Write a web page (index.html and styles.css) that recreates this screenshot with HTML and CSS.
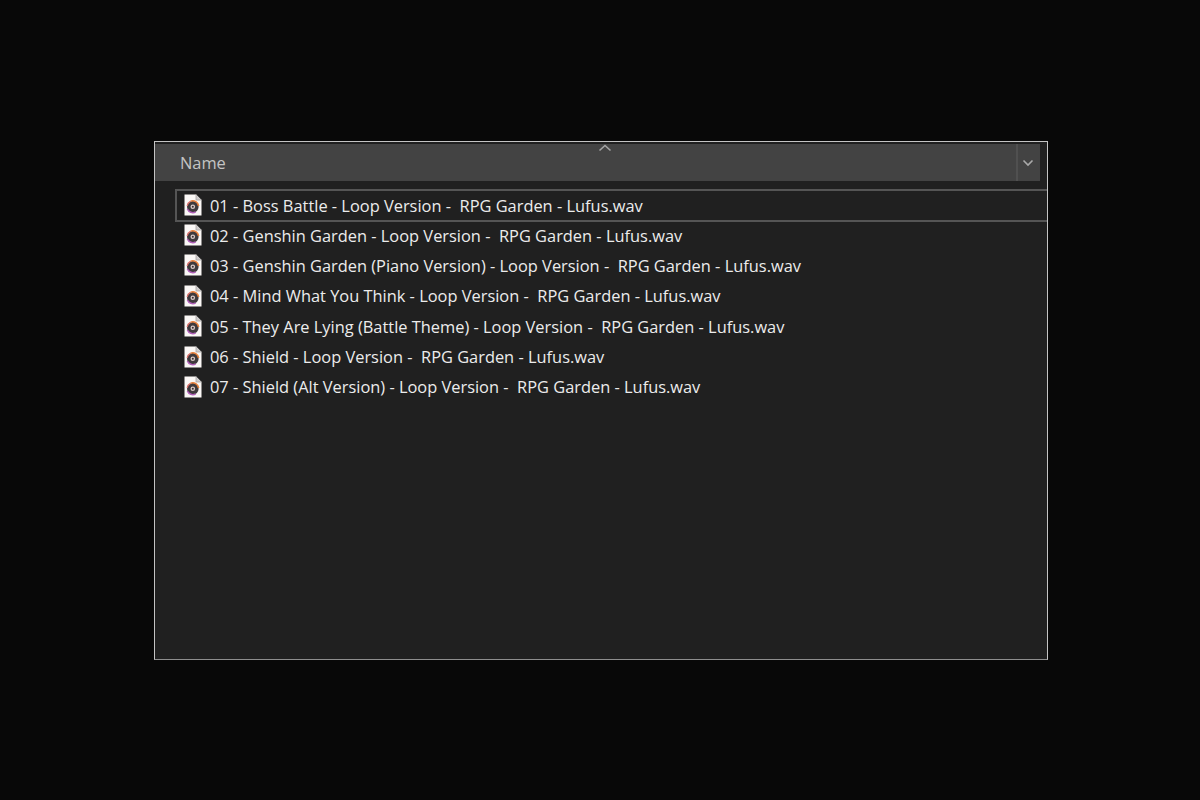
FILE: index.html
```html
<!DOCTYPE html>
<html lang="en">
<head>
<meta charset="utf-8">
<title>Files</title>
<link rel="stylesheet" href="styles.css">
</head>
<body>
<svg class="defs" width="0" height="0" aria-hidden="true">
  <symbol id="wav" viewBox="0 0 18 22">
    <path d="M0.5 0.5H12L17.5 6V21.5H0.5Z" fill="#fbf8f6"/>
    <path d="M12 0.5V6H17.5" fill="#cfcccc" stroke="#a9a5a5" stroke-width="0.8"/>
    <circle cx="8.8" cy="12.8" r="5.8" fill="#3f3a3c"/>
    <path d="M3.4 15A5.9 5.9 0 0 0 11.6 18" fill="none" stroke="#b060b8" stroke-width="1.5"/>
    <path d="M6.6 7.2A5.9 5.9 0 0 1 14.6 12" fill="none" stroke="#e8813c" stroke-width="1.7"/>
    <path d="M3.2 12A5.9 5.9 0 0 1 6.4 7.4" fill="none" stroke="#d8706a" stroke-width="1.2"/>
    <circle cx="8.8" cy="12.8" r="2.3" fill="#d8c8c4"/>
    <circle cx="8.8" cy="12.8" r="1" fill="#3a3034"/>
  </symbol>
</svg>
<main class="window">
  <header class="header">
    <div class="name-col">
      <svg class="sort" width="14" height="8" viewBox="0 0 14 8"><path d="M1.5 6.5L7 1.5L12.5 6.5" fill="none" stroke="#a4a4a4" stroke-width="1.6"/></svg>
      <span class="name-label">Name</span>
    </div>
    <div class="drop-col">
      <svg width="12" height="8" viewBox="0 0 12 8"><path d="M1.5 1.5L6 6L10.5 1.5" fill="none" stroke="#aaaaaa" stroke-width="1.6"/></svg>
    </div>
  </header>
  <ul class="list">
    <li class="row row-selected"><svg class="icon"><use href="#wav"/></svg><span class="file">01 - Boss Battle - Loop Version -  RPG Garden - Lufus.wav</span></li>
    <li class="row"><svg class="icon"><use href="#wav"/></svg><span class="file">02 - Genshin Garden - Loop Version -  RPG Garden - Lufus.wav</span></li>
    <li class="row"><svg class="icon"><use href="#wav"/></svg><span class="file">03 - Genshin Garden (Piano Version) - Loop Version -  RPG Garden - Lufus.wav</span></li>
    <li class="row"><svg class="icon"><use href="#wav"/></svg><span class="file">04 - Mind What You Think - Loop Version -  RPG Garden - Lufus.wav</span></li>
    <li class="row"><svg class="icon"><use href="#wav"/></svg><span class="file">05 - They Are Lying (Battle Theme) - Loop Version -  RPG Garden - Lufus.wav</span></li>
    <li class="row"><svg class="icon"><use href="#wav"/></svg><span class="file">06 - Shield - Loop Version -  RPG Garden - Lufus.wav</span></li>
    <li class="row"><svg class="icon"><use href="#wav"/></svg><span class="file">07 - Shield (Alt Version) - Loop Version -  RPG Garden - Lufus.wav</span></li>
  </ul>
</main>
</body>
</html>
```
FILE: styles.css
```css
* { box-sizing: border-box; }
html, body { margin: 0; height: 100%; }
body {
  width: 1200px;
  height: 800px;
  background: #080808;
  padding: 141px 152px 0 154px;
  font-family: "Open Sans", "Noto Sans", sans-serif;
  overflow: hidden;
}
.defs { position: absolute; }
.window {
  width: 894px;
  height: 519px;
  background: #202020;
  border: 1px solid #c4c4c4;
  border-bottom-color: #8e8e8e;
  padding-top: 2px;
}
.header {
  display: flex;
  height: 37px;
  width: 885px;
  background: #434343;
  color: #c4c4c4;
}
.name-col {
  position: relative;
  flex: 1;
  padding-left: 25px;
  font-size: 16.4px;
  line-height: 38px;
  border-right: 2px solid #505050;
}
.sort { position: absolute; left: 443px; top: 0; }
.drop-col {
  width: 22px;
  padding-right: 2px;
  display: flex;
  align-items: center;
  justify-content: center;
}
.list {
  list-style: none;
  margin: 8px 0 0;
  padding: 0 0 0 20px;
}
.row {
  display: flex;
  align-items: center;
  height: 30.4px;
  padding-left: 7px;
  border: 2px solid transparent;
  border-right: 0;
}
.row-selected {
  height: 33px;
  padding-bottom: 1px;
  margin-bottom: -2.2px;
  border-color: #555555;
}
.icon { width: 18px; height: 22px; flex: none; }
.file {
  margin-left: 8px;
  font-size: 16.4px;
  color: #ececec;
  white-space: pre;
}
```
